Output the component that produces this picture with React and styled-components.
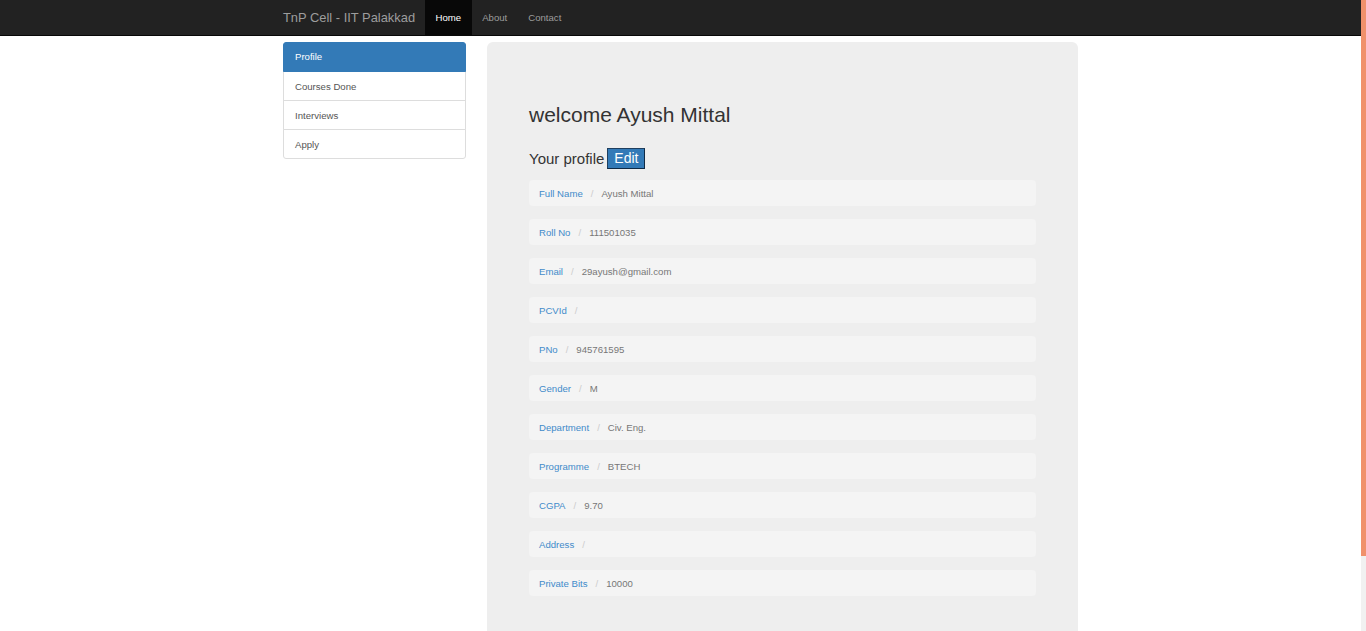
import React from 'react';
import styled, { createGlobalStyle } from 'styled-components';

const GlobalStyle = createGlobalStyle`
  html, body {
    margin: 0;
    padding: 0;
    background: #fff;
    font-family: 'Liberation Sans', Arial, sans-serif;
    color: #333;
  }
`;

// page area sits left of the (styled) scrollbar strip
const Page = styled.div`
  margin-right: 5px;
`;

const ScrollTrack = styled.div`
  position: fixed;
  top: 0;
  right: 0;
  width: 5px;
  height: 100vh;
  background: #f1f1f1;
`;

const ScrollThumb = styled.div`
  height: 556px;
  background: #f0916b;
`;

const Navbar = styled.div`
  height: 35px;
  background: #222;
  border-bottom: 1px solid #080808;
`;

const NavInner = styled.div`
  width: 795px;
  margin: 0 auto;
  display: flex;
  align-items: stretch;
  height: 35px;
`;

const Brand = styled.div`
  font-size: 12.9px;
  color: #9d9d9d;
  line-height: 35px;
  padding-right: 10px;
`;

const NavLink = styled.div`
  font-size: 9.6px;
  line-height: 35px;
  padding: 0 10.5px;
  color: ${(p) => (p.active ? '#fff' : '#9d9d9d')};
  background: ${(p) => (p.active ? '#080808' : 'transparent')};
`;

const Container = styled.div`
  width: 795px;
  margin: 6px auto 0;
  display: flex;
  gap: 21px;
  align-items: flex-start;
`;

const Sidebar = styled.div`
  width: 183px;
  display: flex;
  flex-direction: column;
`;

const SideItem = styled.div`
  height: 30px;
  box-sizing: border-box;
  line-height: ${(p) => (p.active ? '28px' : '29px')};
  padding: 0 11px;
  font-size: 9.6px;
  color: ${(p) => (p.active ? '#fff' : '#555')};
  background: ${(p) => (p.active ? '#337ab7' : '#fff')};
  border: 1px solid ${(p) => (p.active ? '#337ab7' : '#ddd')};
  margin-top: ${(p) => (p.first ? '0' : '-1px')};
  border-radius: ${(p) => (p.first ? '3px 3px 0 0' : p.last ? '0 0 3px 3px' : '0')};
  position: relative;
  z-index: ${(p) => (p.active ? 1 : 0)};
`;

const Jumbotron = styled.div`
  flex: 1;
  background: #eee;
  border-radius: 6px;
  padding: 58px 42px 115px;
`;

const Welcome = styled.h1`
  margin: 0;
  font-size: 21px;
  font-weight: 400;
  line-height: 30px;
  color: #333;
`;

const ProfileTitle = styled.div`
  margin-top: 17px;
  display: flex;
  align-items: center;
  gap: 3px;
  font-size: 15px;
  color: #333;
  height: 22px;
`;

const EditButton = styled.span`
  display: inline-block;
  background: #337ab7;
  color: #fff;
  font-size: 14px;
  line-height: 19px;
  padding: 0 6px;
  border: 1px solid #1f3f5f;
  border-right-color: #0f2a45;
  border-bottom-color: #0f2a45;
`;

const Rows = styled.div`
  margin-top: 11px;
  display: flex;
  flex-direction: column;
  gap: 13px;
`;

const Row = styled.div`
  height: 26px;
  background: #f4f4f4;
  border-radius: 4px;
  display: flex;
  align-items: center;
  padding: 0 10px;
  font-size: 9.6px;
`;

const Label = styled.span`
  color: #428bca;
`;

const Sep = styled.span`
  color: #ccc;
  padding: 0 8px;
`;

const Value = styled.span`
  color: #777;
`;

const fields = [
  ['Full Name', 'Ayush Mittal'],
  ['Roll No', '111501035'],
  ['Email', '29ayush@gmail.com'],
  ['PCVId', ''],
  ['PNo', '945761595'],
  ['Gender', 'M'],
  ['Department', 'Civ. Eng.'],
  ['Programme', 'BTECH'],
  ['CGPA', '9.70'],
  ['Address', ''],
  ['Private Bits', '10000'],
];

export default function App() {
  return (
    <>
      <GlobalStyle />
      <Page>
        <Navbar>
          <NavInner>
            <Brand>TnP Cell - IIT Palakkad</Brand>
            <NavLink active>Home</NavLink>
            <NavLink>About</NavLink>
            <NavLink>Contact</NavLink>
          </NavInner>
        </Navbar>
        <Container>
          <Sidebar>
            <SideItem active first>Profile</SideItem>
            <SideItem>Courses Done</SideItem>
            <SideItem>Interviews</SideItem>
            <SideItem last>Apply</SideItem>
          </Sidebar>
          <Jumbotron>
            <Welcome>welcome Ayush Mittal</Welcome>
            <ProfileTitle>
              Your profile <EditButton>Edit</EditButton>
            </ProfileTitle>
            <Rows>
              {fields.map(([k, v]) => (
                <Row key={k}>
                  <Label>{k}</Label>
                  <Sep>/</Sep>
                  <Value>{v}</Value>
                </Row>
              ))}
            </Rows>
          </Jumbotron>
        </Container>
      </Page>
      <ScrollTrack>
        <ScrollThumb />
      </ScrollTrack>
    </>
  );
}
